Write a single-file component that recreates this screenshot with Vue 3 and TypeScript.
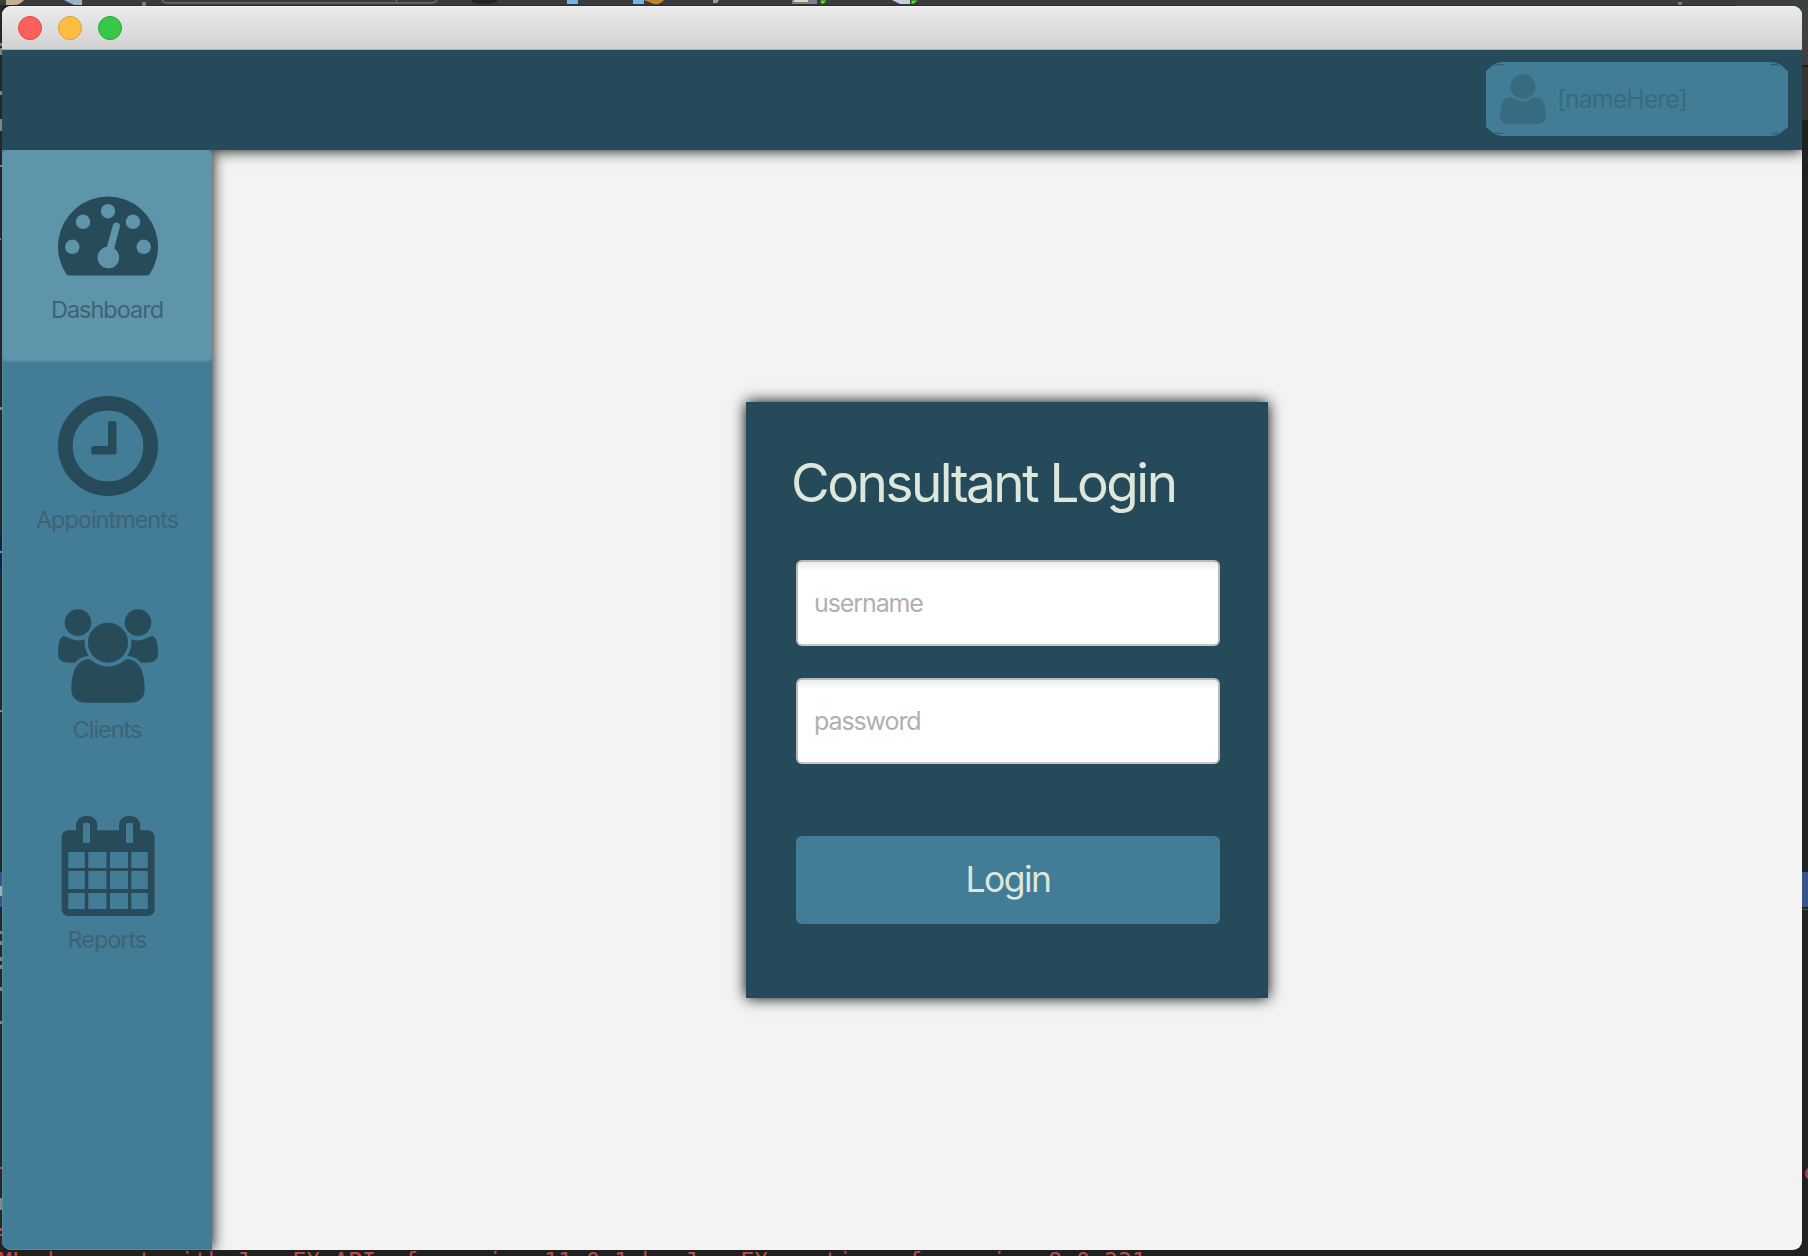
<script setup lang="ts">
import { ref } from 'vue'

interface NavItem {
  label: string
  icon: 'gauge' | 'clock' | 'users' | 'calendar'
}

const items: NavItem[] = [
  { label: 'Dashboard', icon: 'gauge' },
  { label: 'Appointments', icon: 'clock' },
  { label: 'Clients', icon: 'users' },
  { label: 'Reports', icon: 'calendar' },
]
const active = ref('Dashboard')
const username = ref('')
const password = ref('')

// Cell grid of the calendar icon
const cols = [10.3, 30.3, 52, 73.3]
const colWidths = [16.5, 18.2, 18, 16.5]
const rows = [36, 55, 77]
const rowHeights = [16, 18, 16]
</script>

<template>
  <div class="desktop">
    <svg class="backdrop" width="1808" height="1256" viewBox="0 0 1808 1256" aria-hidden="true">
      <rect width="1808" height="1256" fill="#202020" />
      <rect width="1808" height="6" fill="#393b3d" />
      <rect y="5" width="1808" height="1" fill="#292729" />
      <rect x="1736" width="72" height="65" fill="#3d4041" />
      <rect x="1802" y="65" width="6" height="2" fill="#202020" />
      <rect x="1802" y="67" width="6" height="53" fill="#343536" />
      <rect y="6" width="3" height="1244" fill="#262626" />
      <path d="M6 0H24Q20 5 14 5H6Z" fill="#c2b08f" />
      <path d="M64 0H82V5H74Z" fill="#9db2c4" />
      <rect x="142" y="2" width="4" height="4" fill="#77797b" />
      <path d="M162.5 0Q163 3 168 3H430Q436 3 437 0" fill="none" stroke="#6c6e70" stroke-width="1.5" />
      <rect x="396" width="1" height="3" fill="#6c6e70" />
      <path d="M472 0H497V2L488 4H478L472 2Z" fill="#242424" />
      <path d="M567 0H578V4H567ZM633 0H644V4H633Z" fill="#74b4e4" />
      <path d="M644 0H664Q660 5 654 4Z" fill="#bd842e" />
      <path d="M713 0H719L717 3H713Z" fill="#91a68c" />
      <rect x="792" width="25" height="4" fill="#7c828b" />
      <rect x="794" width="14" height="2" fill="#e4d5b0" />
      <path d="M820 0H827L824 4H821Z" fill="#74cf48" stroke="#126414" />
      <path d="M892 0H910V4H900Z" fill="#c3cddd" />
      <path d="M911 0H918L914 4H911Z" fill="#74cf48" stroke="#126414" />
      <rect x="1678" y="2" width="4" height="3" fill="#77797b" />
      <path d="M0 43h2v3H0zM0 48h2v7H0zM0 91h2v4H0zM0 119h2v12H0zM0 165h2v2H0zM0 238h1v2H0zM0 407h2v3H0zM0 551h2v2H0zM0 710h2v2H0zM0 931h2v3H0zM0 941h2v4H0zM0 957h2v4H0zM0 965h2v4H0zM0 987h2v4H0zM0 1021h2v3H0zM0 1198h2v12H0z" fill="#858585" />
      <path d="M0 536h2v14H0zM0 554h2v18H0z" fill="#0b2546" />
      <path d="M0 872h2v35H0zM1802 872h6v35h-6zM1802 909h6v1h-6z" fill="#375487" />
      <path d="M0 886h2v10H0z" fill="#a5abb5" />
      <path d="M0 1167h2v2H0zM0 1228h2v3H0zM0 1234h2v2H0z" fill="#bd4c49" />
      <text class="console" x="1803" y="1180">c</text>
      <text class="console" x="-2" y="1269" textLength="1148">ML document with JavaFX API of version 11.0.1 by JavaFX runtime of version 8.0.231</text>
    </svg>

    <main class="window">
      <div class="titlebar">
        <span class="light close"></span>
        <span class="light minimize"></span>
        <span class="light zoom"></span>
      </div>

      <header class="topbar">
        <div class="user">
          <svg class="user-bg" width="302" height="74" viewBox="0 0 302 74" aria-hidden="true">
            <path d="M0 9L6 4Q11 0 17 0H285Q291 0 296 4L302 9V65L296 70Q291 74 285 74H17Q11 74 6 70L0 65Z" fill="#437c96" />
            <path d="M9 3.5Q12 2.2 17 2.5M293 3.5Q290 2.2 285 2.5M9 70.5Q12 71.8 17 71.5M293 70.5Q290 71.8 285 71.5" fill="none" stroke="#2b566a" stroke-width="1" />
          </svg>
          <svg class="user-icon" width="46" height="50" viewBox="256 256 1408 1536" preserveAspectRatio="none">
            <path d="M1664 1533q0 120-73 189.5t-194 69.5h-874q-121 0-194-69.5t-73-189.5q0-53 3.5-103.5t14-109 26.5-108.5 43-97.5 62-81 85.5-53.5 111.5-20q10 0 43 21.5t73 48 107 48 135 21.5 135-21.5 107-48 73-48 43-21.5q61 0 111.5 20t85.5 53.5 62 81 43 97.5 26.5 108.5 14 109 3.5 103.5zM1344 640q0 159-112.5 271.5t-271.5 112.5-271.5-112.5-112.5-271.5 112.5-271.5 271.5-112.5 271.5 112.5 112.5 271.5z" />
          </svg>
          <span class="user-name">[nameHere]</span>
        </div>
      </header>

      <div class="body">
        <nav class="sidebar">
          <button
            v-for="item in items"
            :key="item.label"
            class="nav-item"
            :class="{ active: active === item.label }"
            type="button"
            @click="active = item.label"
          >
            <svg class="nav-icon" width="100" height="100" viewBox="0 0 100 100">
              <path
                v-if="item.icon === 'gauge'"
                fill-rule="evenodd"
                d="M11 89.500Q9.500 89.500 8.300 88.200A50 50 0 1 1 91.700 88.200Q90.500 89.500 89 89.500ZM50 18a7.200 7.200 0 1 0 0 14.400a7.200 7.200 0 1 0 0-14.400ZM25 28.600a7.200 7.200 0 1 0 0 14.400a7.200 7.200 0 1 0 0-14.400ZM75 28.600a7.200 7.200 0 1 0 0 14.400a7.200 7.200 0 1 0 0-14.400ZM14.300 53.600a7.200 7.200 0 1 0 0 14.400a7.200 7.200 0 1 0 0-14.400ZM85.700 53.600a7.200 7.200 0 1 0 0 14.400a7.200 7.200 0 1 0 0-14.400ZM61.900 40.500A3.600 3.600 0 0 0 54.900 39L49 60.800A10.800 10.800 0 1 0 56.200 62.400Z"
              />
              <template v-else-if="item.icon === 'clock'">
                <circle cx="50" cy="50" r="42.700" fill="none" stroke="#284b5a" stroke-width="14.600" />
                <path d="M52 25H56.500Q58.500 25 58.500 27V56.500Q58.500 58.500 56.500 58.500H35Q33.200 58.500 33.200 56.500V52Q33.200 50 35.200 50H50V27Q50 25 52 25Z" />
              </template>
              <g v-else-if="item.icon === 'users'" transform="translate(0 3.300) scale(.05208)">
                <path d="M593 896q-162 5-265 128h-134q-82 0-138-40.500t-56-118.500q0-353 124-353 6 0 43.500 21t97.500 42.500 119 21.500q67 0 133-23-5 37-5 66 0 139 81 256zm1071 637q0 120-73 189.500t-194 69.500h-874q-121 0-194-69.500t-73-189.500q0-53 3.500-103.500t14-109 26.500-108.500 43-97.500 62-81 85.500-53.500 111.500-20q10 0 43 21.500t73 48 107 48 135 21.500 135-21.500 107-48 73-48 43-21.500q61 0 111.500 20t85.500 53.500 62 81 43 97.500 26.500 108.500 14 109 3.500 103.500zm-1024-1277q0 106-75 181t-181 75-181-75-75-181 75-181 181-75 181 75 75 181zm704 384q0 159-112.500 271.500t-271.500 112.500-271.500-112.500-112.500-271.500 112.500-271.500 271.500-112.500 271.500 112.500 112.500 271.500zm576 225q0 78-56 118.500t-138 40.500h-134q-103-123-265-128 81-117 81-256 0-29-5-66 66 23 133 23 59 0 119-21.500t97.500-42.500 43.500-21q124 0 124 353zm-128-609q0 106-75 181t-181 75-181-75-75-181 75-181 181-75 181 75 75 181z" />
              </g>
              <template v-else>
                <rect x="3.600" y="14.300" width="93" height="85.700" rx="7" />
                <rect x="18" y="0" width="21.200" height="34" rx="9" />
                <rect x="61" y="0" width="21.200" height="34" rx="9" />
                <rect class="hole" x="25" y="7" width="7" height="20" rx="1.500" />
                <rect class="hole" x="68" y="7" width="7" height="20" rx="1.500" />
                <template v-for="(y, r) in rows" :key="y">
                  <rect v-for="(x, c) in cols" :key="x" class="hole" :x="x" :y="y" :width="colWidths[c]" :height="rowHeights[r]" />
                </template>
              </template>
            </svg>
            <span class="nav-label">{{ item.label }}</span>
          </button>
        </nav>

        <section class="content">
          <form class="card" @submit.prevent>
            <h1>Consultant Login</h1>
            <input v-model="username" type="text" placeholder="username" />
            <input v-model="password" type="password" placeholder="password" />
            <button class="login" type="submit">Login</button>
          </form>
        </section>
      </div>
    </main>
  </div>
</template>

<style>
body {
  margin: 0;
  overflow: hidden;
}
</style>

<style scoped>
.desktop {
  position: relative;
  display: flex;
  box-sizing: border-box;
  width: 1808px;
  height: 1256px;
  padding: 6px 6px 6px 2px;
  overflow: hidden;
  font-family: Inter, "Liberation Sans", sans-serif;
}
.backdrop {
  position: absolute;
  inset: 0;
}
.console {
  font: 23.25px "DejaVu Sans Mono", monospace;
  fill: #bb4b49;
}
.window {
  position: relative;
  display: flex;
  flex-direction: column;
  flex: 1;
  border-radius: 9px;
  overflow: hidden;
  background: #f3f3f3;
}
.titlebar {
  position: relative;
  z-index: 1;
  display: flex;
  align-items: center;
  gap: 16px;
  box-sizing: border-box;
  height: 44px;
  padding-left: 16px;
  border-top: 1px solid #f7f5f6;
  border-bottom: 1px solid #afb1b0;
  background: linear-gradient(#eaeaea, #d2d2d2);
}
.light {
  box-sizing: border-box;
  width: 24px;
  height: 24px;
  border-radius: 50%;
  border: 1px solid;
}
.close {
  background: #fd605c;
  border-color: #df4744;
}
.minimize {
  background: #febe41;
  border-color: #dd9e34;
}
.zoom {
  background: #35c84a;
  border-color: #25a632;
}
.topbar {
  position: relative;
  display: flex;
  justify-content: flex-end;
  box-sizing: border-box;
  height: 100px;
  padding: 12px 14px 14px;
  background: #254a59;
  box-shadow: 0 0 14px #000;
}
.user {
  position: relative;
  display: flex;
  align-items: center;
  box-sizing: border-box;
  width: 302px;
  padding-left: 14px;
}
.user-bg {
  position: absolute;
  inset: 0;
}
.user-icon {
  position: relative;
  fill: #386b80;
}
.user-name {
  position: relative;
  margin-left: 11px;
  font-size: 25px;
  letter-spacing: -1.05px;
  color: #386b80;
}
.body {
  display: flex;
  flex: 1;
}
.sidebar {
  position: relative;
  display: flex;
  flex-direction: column;
  width: 210px;
  background: #437c96;
  box-shadow: inset 1px 0 #4f8ba3, inset 0 -1px #4f8ba3, 0 0 14px #000;
  clip-path: inset(0 -30px 0 0);
}
.nav-item {
  --bg: #437c96;
  display: flex;
  flex-direction: column;
  align-items: center;
  box-sizing: border-box;
  height: 210px;
  padding: 36px 0 0 2px;
  border: 0;
  background: none;
  font: inherit;
}
.nav-item.active {
  --bg: #5f95aa;
  background: var(--bg);
  border-radius: 5px;
  box-shadow: 0 2px #568da4;
}
.nav-icon {
  fill: #284b5a;
}
.hole {
  fill: var(--bg);
}
.nav-label {
  margin-top: 9px;
  margin-left: -2px;
  font-size: 23.5px;
  line-height: 30px;
  letter-spacing: -1.02px;
  color: #3e6374;
}
.content {
  display: flex;
  flex: 1;
}
.card {
  display: flex;
  flex-direction: column;
  box-sizing: border-box;
  width: 522px;
  height: 596px;
  margin: 252px 0 0 534px;
  padding: 47px 48px 0 50px;
  background: #254a59;
  box-shadow: 0 0 14px #000;
}
h1 {
  margin: 0 0 43px -5px;
  font-size: 53px;
  line-height: 68px;
  font-weight: 400;
  letter-spacing: -2.47px;
  color: #dde7dc;
  white-space: nowrap;
}
input {
  box-sizing: border-box;
  width: 424px;
  height: 86px;
  margin: 0 0 32px;
  padding: 0 16px 1px;
  border: 2px solid #bababa;
  border-bottom-color: #c8c8c8;
  border-radius: 6px;
  background: linear-gradient(#ececec, #fff 9px);
  font: 25px Inter, "Liberation Sans", sans-serif;
  letter-spacing: -1.1px;
  outline: none;
}
input::placeholder {
  color: #b0b0b0;
  opacity: 1;
}
.login {
  height: 88px;
  margin-top: 40px;
  padding: 0 0 2px;
  border: 0;
  border-radius: 6px;
  background: #437c96;
  color: #dde7dc;
  font: 35.5px Inter, "Liberation Sans", sans-serif;
  letter-spacing: -1.5px;
}
</style>
